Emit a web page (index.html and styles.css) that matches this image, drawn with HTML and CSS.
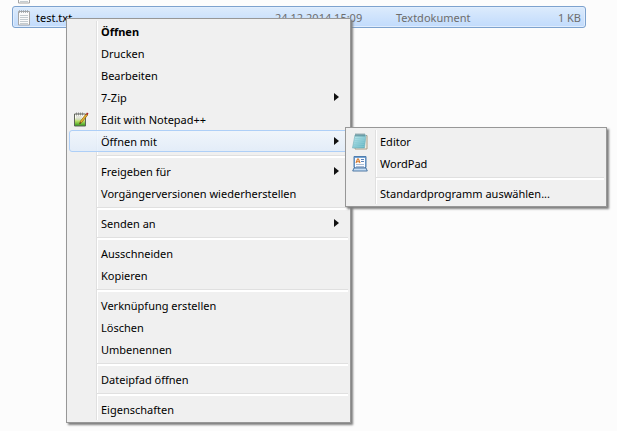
FILE: index.html
```
<!DOCTYPE html>
<html lang="de">

<head>
    <meta charset="UTF-8">
    <meta name="viewport" content="width=device-width, initial-scale=1.0">
    <title>test.txt</title>
    <link rel="stylesheet" href="styles.css">
</head>

<body>
    <svg width="0" height="0" class="symbols">
        <symbol id="text-file" viewBox="0 0 14 17">
            <path d="M1.500 2.500h11v13.500h-11z" fill="#fbfbfb" stroke="#a5a5a5" />
            <path d="M2.500 1v3M4.500 1v3M6.500 1v3M8.500 1v3M10.500 1v3" stroke="#9aa3a9" stroke-width=".8" />
            <path d="M3 6.500h8M3 8.500h8M3 10.500h8M3 12.500h8M3 14.500h8" stroke="#c3cbd0" />
        </symbol>
    </svg>

    <main class="explorer">
        <div class="file previous">
            <svg class="file-icon"><use href="#text-file" /></svg>
        </div>
        <div class="file selected">
            <svg class="file-icon"><use href="#text-file" /></svg>
            <span class="file-name">test.txt</span>
            <span>24.12.2014 15:09</span>
            <span>Textdokument</span>
            <span class="file-size">1 KB</span>
        </div>
    </main>

    <ul class="menu context-menu">
        <li><button type="button" class="default">Öffnen</button></li>
        <li><button type="button">Drucken</button></li>
        <li><button type="button">Bearbeiten</button></li>
        <li><button type="button" class="has-submenu">7-Zip</button></li>
        <li>
            <button type="button">
                <svg class="icon" viewBox="0 0 16 16">
                    <defs>
                        <linearGradient id="green" x2="0" y2="1">
                            <stop offset=".3" stop-color="#fdfdf5" />
                            <stop offset=".6" stop-color="#b5dc63" />
                            <stop offset="1" stop-color="#2f9a18" />
                        </linearGradient>
                    </defs>
                    <path d="M1.500 2.500h11v12h-11z" fill="url(#green)" stroke="#5d6258" />
                    <path d="M3.500 1v3M5.500 1v3M7.500 1v3M9.500 1v3" stroke="#777" stroke-width=".8" />
                    <path d="M3 5.500h6M3 7.500h5" stroke="#c8cdbf" />
                    <path d="M6.500 12.500l1-3 5.500-7 1.500 1.200-5.500 7z" fill="#e8b62c" stroke="#8b5a1c" stroke-width=".7" />
                    <path d="M13 2.500l1-1.500 1.500 1-1 1.700z" fill="#a82420" />
                    <path d="M6.500 12.500l.6-1.700 1 .8z" fill="#222" />
                </svg>
                Edit with Notepad++
            </button>
        </li>
        <li class="open">
            <button type="button" class="has-submenu active">Öffnen mit</button>
            <ul class="menu submenu">
                <li>
                    <button type="button">
                        <svg class="icon" viewBox="0 0 16 17">
                            <defs>
                                <linearGradient id="teal" x2="1" y2="1">
                                    <stop offset="0" stop-color="#c8edf1" />
                                    <stop offset="1" stop-color="#55aebd" />
                                </linearGradient>
                            </defs>
                            <path d="M4 2.500h11v13.500h-12z" fill="#f4f1e8" stroke="#a99a82" />
                            <path d="M3 2h11l-1.500 13h-12z" fill="url(#teal)" stroke="#7cb5bf" stroke-width=".7" />
                            <path d="M3 5.500h10M2.500 7.500h10M2.500 9.500h10M2 11.500h10M2 13.500h10" stroke="#8bcbd5" stroke-width=".6" />
                            <path d="M4 .5v3M6 .5v3M8 .5v3M10 .5v3M12 .5v3" stroke="#386a75" stroke-width=".9" />
                        </svg>
                        Editor
                    </button>
                </li>
                <li>
                    <button type="button">
                        <svg class="icon" viewBox="0 0 16 17">
                            <path d="M2 1.500h12v11h-12z" fill="#74a3d3" stroke="#4f7dae" />
                            <path d="M3 3h10v9.500h-10z" fill="#f9fbff" />
                            <path d="M4 8l1.500-4h1l1.500 4M4.700 6.700h2.600" fill="none" stroke="#d87929" stroke-width="1.100" />
                            <path d="M9 4.500h3M9 6.500h3" stroke="#5e84b7" />
                            <path d="M4 9.500h8M4 11.500h8" stroke="#a7bbd4" />
                            <path d="M2 13h12l1.300 3h-14.600z" fill="#c6def5" stroke="#3e6c9c" stroke-width=".9" />
                        </svg>
                        WordPad
                    </button>
                </li>
                <li class="separator"></li>
                <li><button type="button">Standardprogramm auswählen...</button></li>
            </ul>
        </li>
        <li class="separator"></li>
        <li><button type="button" class="has-submenu">Freigeben für</button></li>
        <li><button type="button">Vorgängerversionen wiederherstellen</button></li>
        <li class="separator"></li>
        <li><button type="button" class="has-submenu">Senden an</button></li>
        <li class="separator"></li>
        <li><button type="button">Ausschneiden</button></li>
        <li><button type="button">Kopieren</button></li>
        <li class="separator"></li>
        <li><button type="button">Verknüpfung erstellen</button></li>
        <li><button type="button">Löschen</button></li>
        <li><button type="button">Umbenennen</button></li>
        <li class="separator"></li>
        <li><button type="button">Dateipfad öffnen</button></li>
        <li class="separator"></li>
        <li><button type="button">Eigenschaften</button></li>
    </ul>
</body>

</html>
```
FILE: styles.css
```
* {
    box-sizing: border-box;
}

body {
    margin: 0;
    min-height: 100vh;
    background: #fcfcfc;
    color: #000;
    font-family: "Noto Sans", "Open Sans", sans-serif;
    font-size: 11px;
}

.symbols {
    position: absolute;
}

.explorer {
    padding: 0 31px 0 12px;
}

.file {
    display: grid;
    grid-template-columns: 14px 244px 121px 1fr auto;
    align-items: center;
    height: 22px;
    padding: 0 4px;
    border: 1px solid transparent;
    color: #6d6d6d;
}

.file.previous {
    height: 6px;
    align-content: end;
    padding-bottom: 1px;
}

.file.selected {
    border-color: #7da2ce;
    border-radius: 3px;
    background: linear-gradient(#dcebfc, #c1dbfc);
    box-shadow: inset 0 0 0 1px #e0edfd;
}

.file-icon {
    width: 14px;
    height: 17px;
}

.file-name {
    padding-left: 5px;
    color: #000;
}

.file-size {
    text-align: right;
}

.menu {
    position: absolute;
    margin: 0;
    padding: 2px;
    list-style: none;
    border: 1px solid #979797;
    background: linear-gradient(#e0e0e0, #e0e0e0) 29px 2px / 1px calc(100% - 4px) no-repeat,
        linear-gradient(#fff, #fff) 30px 2px / 1px calc(100% - 4px) no-repeat,
        #f0f0f0;
    box-shadow: 2px 2px 2px #7f7f7f;
}

.context-menu {
    top: 18px;
    left: 66px;
    width: 285px;
    padding-top: 1px;
}

.submenu {
    top: -3px;
    left: calc(100% - 3px);
    width: 262px;
    z-index: 1;
}

.open {
    position: relative;
}

.menu button {
    display: flex;
    align-items: center;
    position: relative;
    width: 100%;
    height: 22px;
    padding: 0 8px 0 31px;
    border: 1px solid transparent;
    border-radius: 3px;
    background: none;
    color: inherit;
    font: inherit;
    text-align: left;
    white-space: nowrap;
}

.menu button.default {
    font-weight: bold;
}

.menu button:hover,
.menu button.active {
    border-color: #aecff7;
    background: linear-gradient(rgba(240, 246, 253, .8), rgba(224, 236, 250, .8));
}

.has-submenu::after {
    content: "";
    margin-left: auto;
    border: 4px solid transparent;
    border-left: 5px solid #111;
    border-right: 0;
}

.icon {
    position: absolute;
    left: 3px;
    width: 16px;
    height: 17px;
}

.separator {
    height: 8px;
    margin-left: 28px;
    padding-top: 3px;
}

.separator::before {
    content: "";
    display: block;
    height: 2px;
    border-top: 1px solid #e0e0e0;
    background: #fff;
}
```
